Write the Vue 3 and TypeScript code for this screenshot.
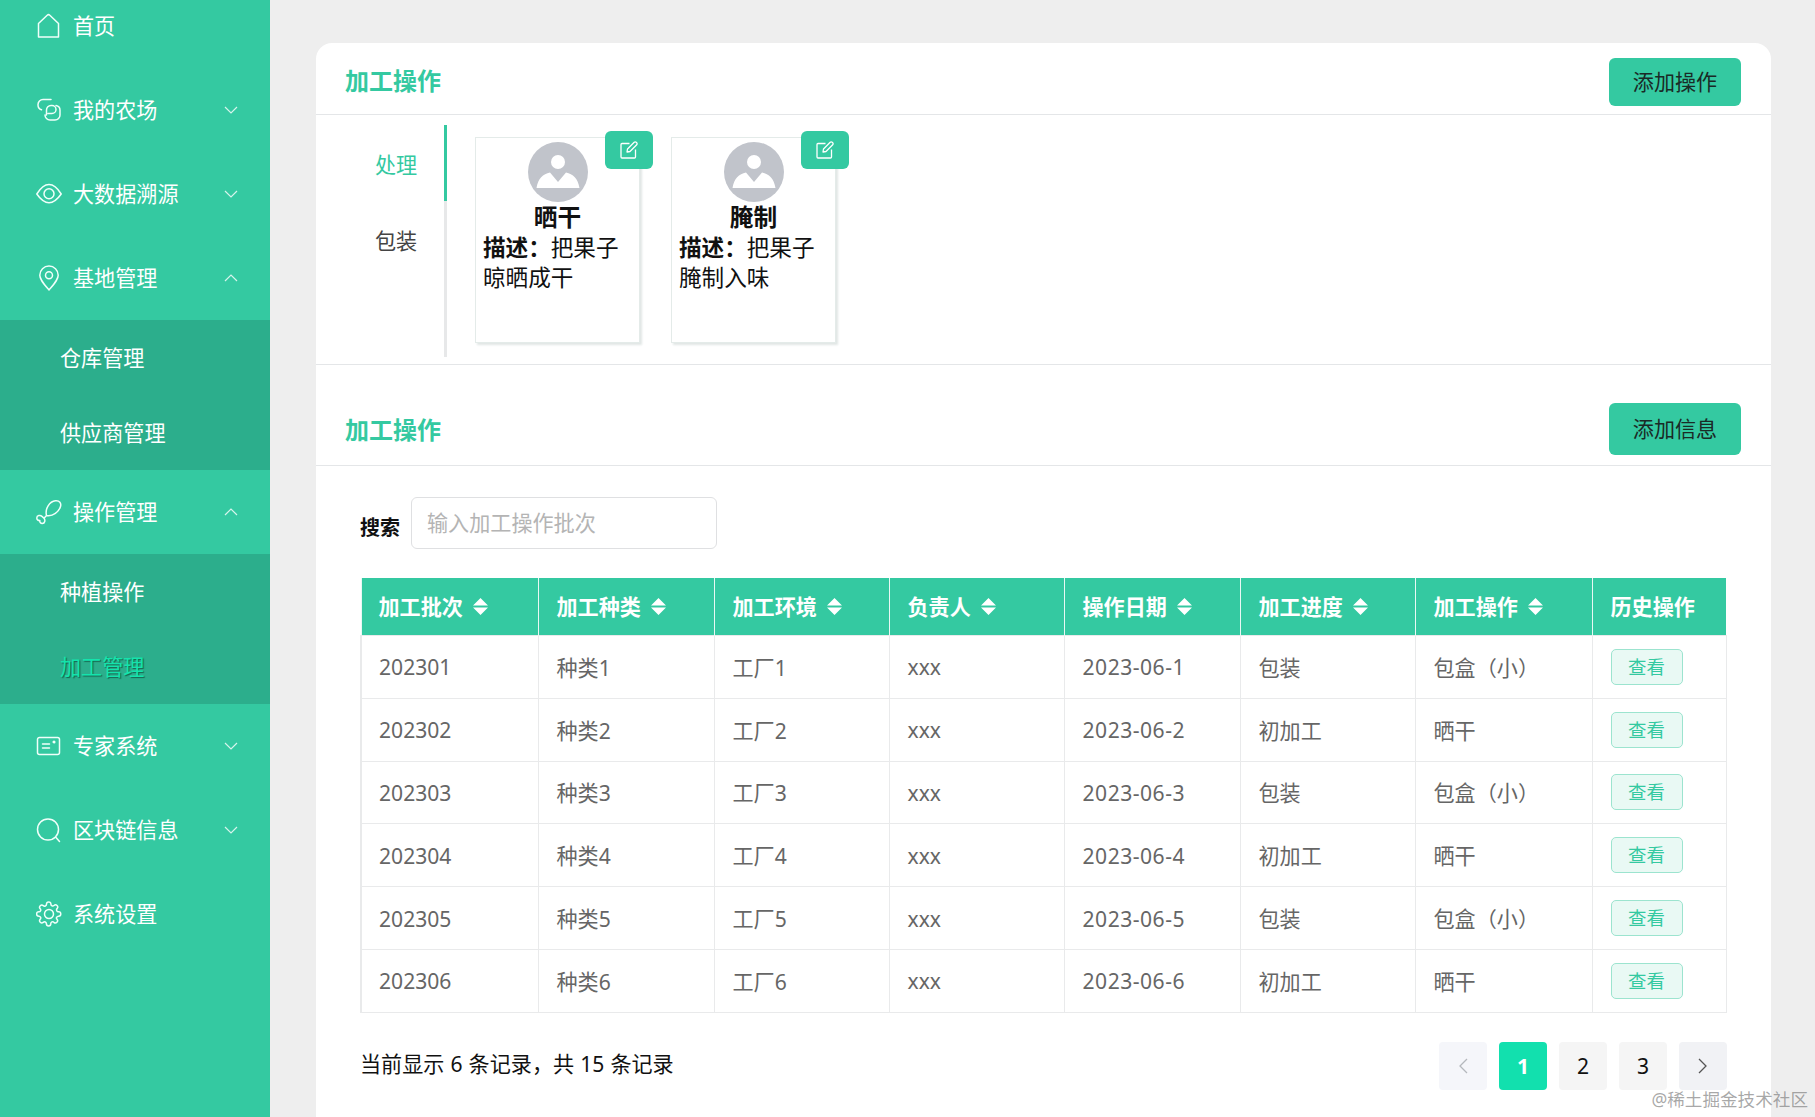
<script setup lang="ts">
interface MenuItem {
  label: string
  icon: string
  arrow?: 'up' | 'down'
  children?: { label: string; active?: boolean }[]
}

interface Craft {
  name: string
  desc: string
}

const circle = (cx: number, cy: number, r: number): string =>
  `M${cx - r} ${cy}a${r} ${r} 0 1 0 ${r * 2} 0a${r} ${r} 0 1 0 ${-r * 2} 0Z`

const icons = {
  home: 'M2.5 10.5 11.2 2.2a2 2 0 0 1 2.6 0l8.7 8.3V24H2.5Z',
  farm: 'M15 2.5H7A5 5 0 0 0 2 7.5v.5a5 5 0 0 0 3.5 4.8M10.5 18v-5a4.5 4.5 0 0 1 4.5-4.5h1a4 4 0 0 1 0 8h-4M20 8.5a4.8 4.8 0 0 1 4 4.7V18a5 5 0 0 1-5 5h-5a5 5 0 0 1-5-5',
  eye: `M.8 13C5 6.2 9 3.5 13 3.5S21 6.2 25.2 13C21 19 17 21.8 13 21.8S5 19 .8 13Z${circle(13, 12.7, 5)}`,
  pin: `M13 25C7.500 18.500 3.800 14.500 3.800 10.200a9.200 9.200 0 0 1 18.400 0C22.200 14.500 18.500 18.500 13 25Z${circle(13, 10.200, 3.500)}`,
  leg: 'M10.500 16.500C8.800 9.500 13.500 2.500 19.500 1.800 23.500 1.400 25.500 4 24.500 7.500 23 12.500 17 17.800 10.500 16.500ZM10.500 16.500 8 19.200M8 19.200C9.500 21 9 24.500 6.300 24.500 4.500 24.500 3.500 23 3.800 21.500 2 21.800.8 20.500.8 18.900.8 16.300 4.500 15.800 6 17.400Z',
  card: `M3.500 4.500h18a2 2 0 0 1 2 2v13a2 2 0 0 1-2 2h-18a2 2 0 0 1-2-2v-13a2 2 0 0 1 2-2ZM6.500 11h7M6.500 15h7${circle(18, 9, 0.800)}`,
  search: `${circle(12, 12.500, 10.500)}M20 20.500 23.500 24.500`,
  gear: `M20.600 16.200a1.800 1.800 0 0 0 .36 2l.07.06a2.200 2.200 0 0 1-3.100 3.100l-.07-.07a1.800 1.800 0 0 0-3.060 1.280v.2a2.200 2.200 0 0 1-4.400 0v-.1a1.800 1.800 0 0 0-3.080-1.300l-.07.07a2.200 2.200 0 0 1-3.100-3.100l.07-.07a1.800 1.800 0 0 0-1.280-3.060H2.800a2.200 2.200 0 0 1 0-4.400h.1a1.800 1.800 0 0 0 1.300-3.080l-.07-.07a2.200 2.200 0 0 1 3.100-3.100l.07.07a1.800 1.800 0 0 0 2 .36h.1a1.800 1.800 0 0 0 1.100-1.660v-.2a2.200 2.200 0 0 1 4.400 0v.1a1.800 1.800 0 0 0 3.080 1.300l.07-.07a2.200 2.200 0 0 1 3.100 3.100l-.07.07a1.800 1.800 0 0 0-.36 2v.1a1.800 1.800 0 0 0 1.660 1.100h.2a2.200 2.200 0 0 1 0 4.400h-.1a1.800 1.800 0 0 0-1.650 1.100Z${circle(13, 13, 4.500)}`,
}

const menu: MenuItem[] = [
  { label: '首页', icon: icons.home },
  { label: '我的农场', icon: icons.farm, arrow: 'down' },
  { label: '大数据溯源', icon: icons.eye, arrow: 'down' },
  {
    label: '基地管理',
    icon: icons.pin,
    arrow: 'up',
    children: [{ label: '仓库管理' }, { label: '供应商管理' }],
  },
  {
    label: '操作管理',
    icon: icons.leg,
    arrow: 'up',
    children: [{ label: '种植操作' }, { label: '加工管理', active: true }],
  },
  { label: '专家系统', icon: icons.card, arrow: 'down' },
  { label: '区块链信息', icon: icons.search, arrow: 'down' },
  { label: '系统设置', icon: icons.gear },
]

const crafts: Craft[] = [
  { name: '晒干', desc: '把果子晾晒成干' },
  { name: '腌制', desc: '把果子腌制入味' },
]

const columns = ['加工批次', '加工种类', '加工环境', '负责人', '操作日期', '加工进度', '加工操作']
const widths = [177, 176, 175, 175, 176, 175, 177, 134]

const rows = [1, 2, 3, 4, 5, 6].map((n) => ({
  batch: `20230${n}`,
  kind: `种类${n}`,
  factory: `工厂${n}`,
  owner: 'xxx',
  date: `2023-06-${n}`,
  progress: n % 2 ? '包装' : '初加工',
  action: n % 2 ? '包盒（小）' : '晒干',
}))
</script>

<template>
  <div class="page">
    <aside class="sidebar">
      <div class="menu">
        <template v-for="item in menu" :key="item.label">
          <div class="menu-item">
            <svg class="menu-icon" viewBox="0 0 26 26"><path :d="item.icon" /></svg>
            <span class="menu-label">{{ item.label }}</span>
            <svg v-if="item.arrow" class="menu-arrow" viewBox="0 0 14 8">
              <path :d="item.arrow === 'up' ? 'M1 7 7 1l6 6' : 'M1 1l6 6 6-6'" />
            </svg>
          </div>
          <div v-if="item.children" class="submenu">
            <div
              v-for="child in item.children"
              :key="child.label"
              class="submenu-item"
              :class="{ active: child.active }"
            >
              {{ child.label }}
            </div>
          </div>
        </template>
      </div>
    </aside>

    <main class="main">
      <div class="panel">
        <header class="panel-head first">
          <h2 class="panel-title">加工操作</h2>
          <button class="btn-add" type="button">添加操作</button>
        </header>
        <section class="craft-box">
          <div class="tabs">
            <div class="tab active">处理</div>
            <div class="tab">包装</div>
          </div>
          <div class="craft-list">
            <div v-for="craft in crafts" :key="craft.name" class="craft-card">
              <button class="btn-edit" type="button" aria-label="编辑">
                <svg viewBox="0 0 18 18">
                  <path d="M9.500 2.500H2a1 1 0 0 0-1 1V16a1 1 0 0 0 1 1h12.500a1 1 0 0 0 1-1V8.500" />
                  <path d="M14.200 1.300a1.400 1.400 0 0 1 2 0l.5.5a1.400 1.400 0 0 1 0 2L10 10.500l-3 .5.500-3Z" />
                </svg>
              </button>
              <svg class="avatar" viewBox="0 0 60 60">
                <circle cx="30" cy="30" r="30" fill="#c1c4cb" />
                <circle cx="30" cy="20" r="7" fill="#fff" />
                <path d="M22 30.500 30 40l8-9.500c7 1.500 12 6 13.500 15.500h-43C10 36.500 15 32 22 30.500Z" fill="#fff" />
              </svg>
              <div class="craft-name">{{ craft.name }}</div>
              <div class="craft-desc"><b>描述：</b>{{ craft.desc }}</div>
            </div>
          </div>
        </section>

        <header class="panel-head second">
          <h2 class="panel-title">加工操作</h2>
          <button class="btn-add tall" type="button">添加信息</button>
        </header>
        <section class="records">
          <div class="search">
            <label class="search-label" for="batch">搜索</label>
            <input id="batch" class="search-input" type="text" placeholder="输入加工操作批次" />
          </div>

          <table class="table">
            <colgroup>
              <col v-for="(w, i) in widths" :key="i" :width="w" />
            </colgroup>
            <thead>
              <tr>
                <th v-for="col in columns" :key="col">
                  <span class="th-inner">
                    {{ col }}
                    <svg class="sort" viewBox="0 0 15 17">
                      <path d="M7.500 0 15 7.500H0ZM7.500 17 0 9.500h15Z" />
                    </svg>
                  </span>
                </th>
                <th><span class="th-inner">历史操作</span></th>
              </tr>
            </thead>
            <tbody>
              <tr v-for="row in rows" :key="row.batch">
                <td>{{ row.batch }}</td>
                <td>{{ row.kind }}</td>
                <td>{{ row.factory }}</td>
                <td>{{ row.owner }}</td>
                <td class="cell-date">{{ row.date }}</td>
                <td>{{ row.progress }}</td>
                <td>{{ row.action }}</td>
                <td><button class="btn-view" type="button">查看</button></td>
              </tr>
            </tbody>
          </table>

          <div class="table-foot">
            <span class="summary">当前显示 6 条记录，共 15 条记录</span>
            <nav class="pager">
              <button class="page-btn prev" type="button" aria-label="上一页">
                <svg viewBox="0 0 10 16"><path d="M9 1 2 8l7 7" /></svg>
              </button>
              <button class="page-btn current" type="button">1</button>
              <button class="page-btn" type="button">2</button>
              <button class="page-btn" type="button">3</button>
              <button class="page-btn next" type="button" aria-label="下一页">
                <svg viewBox="0 0 10 16"><path d="m1 1 7 7-7 7" /></svg>
              </button>
            </nav>
          </div>
        </section>
      </div>
    </main>

    <div class="watermark">@稀土掘金技术社区</div>
  </div>
</template>

<style>
html,
body {
  margin: 0;
  background: #eeeeee;
}
</style>

<style scoped>
.page {
  position: relative;
  display: flex;
  height: 1117px;
  overflow: hidden;
  background: #eeeeee;
  font-family: "Noto Sans", "Noto Sans CJK SC", sans-serif;
  color: #111;
}
.sidebar {
  flex: 0 0 270px;
  background: #34c9a1;
  color: #fff;
  font-size: 21.100px;
}
.menu {
  margin-top: -16px;
}
.menu-item {
  display: flex;
  align-items: center;
  height: 84px;
  padding: 0 32px 0 36px;
}
.menu-icon {
  flex: none;
  width: 26px;
  height: 26px;
  margin-right: 11px;
  fill: none;
  stroke: #f0fffa;
  stroke-width: 1.500;
  stroke-linejoin: round;
  stroke-linecap: round;
}
.menu-label {
  flex: 1;
  margin-top: -2.500px;
}
.menu-arrow {
  width: 14px;
  height: 8px;
  fill: none;
  stroke: rgba(255, 255, 255, 0.8);
  stroke-width: 1.200;
}
.submenu {
  background: #2cae8c;
}
.submenu-item {
  display: flex;
  align-items: center;
  height: 75px;
  padding: 0 0 1px 60px;
  box-sizing: border-box;
}
.submenu-item.active {
  color: #14e3ac;
  text-shadow: 1px 1px 1px rgba(0, 40, 30, 0.55);
}
.main {
  flex: 1;
  padding: 43px 44px 0 46px;
}
.panel {
  min-height: 1200px;
  background: #fff;
  border-radius: 16px 16px 0 0;
}
.panel-head {
  display: flex;
  align-items: center;
  justify-content: space-between;
  padding: 15px 30px 8px 29px;
  border-bottom: 1px solid #e4e6e8;
}
.panel-head.second {
  padding-top: 38px;
  padding-bottom: 10px;
}
.panel-head.first .panel-title {
  margin-top: -3px;
}
.panel-head.second .panel-title {
  margin-top: 1px;
}
.panel-title {
  margin: 0;
  font-size: 24px;
  font-weight: 700;
  line-height: 1;
  color: #34c9a1;
}
.btn-add {
  width: 132px;
  height: 48px;
  padding: 0 0 2px;
  border: 0;
  border-radius: 6px;
  background: #34c9a1;
  color: #1a2a26;
  font: inherit;
  font-size: 21.100px;
  cursor: pointer;
}
.btn-add.tall {
  height: 52px;
}
.craft-box {
  display: flex;
  align-items: flex-start;
  padding: 10px 0 7px;
  border-bottom: 1px solid #e4e6e8;
}
.tabs {
  flex: none;
  box-sizing: border-box;
  width: 131px;
  height: 232px;
  border-right: 3px solid #e7e8e9;
}
.tab {
  box-sizing: border-box;
  height: 76px;
  margin-right: -3px;
  padding: 2px 0 0 59px;
  display: flex;
  align-items: center;
  font-size: 21.100px;
  color: #444;
}
.tab.active {
  border-right: 3px solid #34c9a1;
  color: #34c9a1;
}
.craft-list {
  display: flex;
  gap: 31px;
  padding: 12px 0 0 28px;
}
.craft-card {
  position: relative;
  box-sizing: border-box;
  width: 165px;
  height: 206px;
  padding: 4px 7px 0;
  border: 1px solid #e4ebe9;
  box-shadow: 2px 2px 2px rgba(40, 80, 70, 0.14);
  font-size: 22.600px;
  line-height: 30px;
  color: #111;
}
.btn-edit {
  position: absolute;
  top: -7px;
  right: -14px;
  display: flex;
  align-items: center;
  justify-content: center;
  width: 48px;
  height: 38px;
  padding: 0;
  border: 0;
  border-radius: 6px;
  background: #34c9a1;
}
.btn-edit svg {
  width: 18px;
  height: 18px;
  fill: none;
  stroke: #fff;
  stroke-width: 1.300;
  stroke-linejoin: round;
}
.avatar {
  display: block;
  width: 60px;
  height: 60px;
  margin: 0 auto;
}
.craft-name {
  font-size: 23.700px;
  font-weight: 700;
  text-align: center;
}
.craft-desc {
  margin-top: 1px;
}
.craft-desc b {
  font-weight: 700;
}
.records {
  padding: 31px 0 0 44px;
}
.search {
  display: flex;
  align-items: flex-start;
  gap: 11px;
}
.search-label {
  margin-top: 16px;
  font-size: 20px;
  font-weight: 700;
  line-height: 30px;
}
.search-input {
  box-sizing: border-box;
  width: 306px;
  height: 52px;
  padding: 0 15px 2px;
  border: 1.500px solid #dfe0e2;
  border-radius: 6px;
  outline: none;
  font: inherit;
  font-size: 21.100px;
  color: #333;
}
.search-input::placeholder {
  color: #b4b4b4;
}
.table {
  width: 1365px;
  margin-top: 29px;
  border-collapse: collapse;
  table-layout: fixed;
  font-size: 21.100px;
  color: #666;
}
.table th {
  height: 57px;
  padding: 0 0 0 18px;
  border-left: 1px solid #e9f8f4;
  background: #34c9a1;
  color: #fff;
  font-weight: 700;
  text-align: left;
  white-space: nowrap;
}
.table th:first-child,
.table td:first-child {
  padding-left: 17px;
}
.th-inner {
  display: flex;
  align-items: center;
  gap: 10px;
  margin-top: -2px;
}
.sort {
  width: 15px;
  height: 17px;
  margin-top: 2px;
  fill: #fff;
}
.table td {
  height: 61.800px;
  padding: 0 0 0 18px;
  border: 1px solid #e9eaeb;
}
.table td:first-child {
  border-left-width: 2px;
}
.table td.cell-date {
  letter-spacing: 0.500px;
}
.btn-view {
  display: block;
  box-sizing: border-box;
  width: 72px;
  height: 36px;
  padding: 0 0 2px;
  border: 1px solid #9ce4cf;
  border-radius: 5px;
  background: #e9f9f4;
  color: #34c9a1;
  font: inherit;
  font-size: 18.400px;
}
.table-foot {
  display: flex;
  align-items: center;
  justify-content: space-between;
  width: 1367px;
  margin-top: 29px;
}
.summary {
  padding-bottom: 6px;
  font-size: 21.100px;
  word-spacing: 0.600px;
}
.pager {
  display: flex;
  gap: 12px;
}
.page-btn {
  display: flex;
  align-items: center;
  justify-content: center;
  width: 48px;
  height: 48px;
  padding: 0;
  border: 0;
  border-radius: 4px;
  background: #f5f5f5;
  color: #111;
  font: inherit;
  font-size: 21.100px;
}
.page-btn svg {
  width: 10px;
  height: 16px;
  fill: none;
  stroke: #555;
  stroke-width: 1.300;
}
.page-btn.prev {
  background: #f5f6fa;
}
.page-btn.prev svg {
  stroke: #b5b8bd;
}
.page-btn.next {
  background: #f1f2f5;
}
.page-btn.current {
  background: #12e0ae;
  color: #fff;
  font-weight: 700;
}
.watermark {
  position: absolute;
  right: 7px;
  bottom: 6px;
  font-size: 17.600px;
  line-height: 24px;
  color: rgba(110, 110, 110, 0.6);
}
</style>
